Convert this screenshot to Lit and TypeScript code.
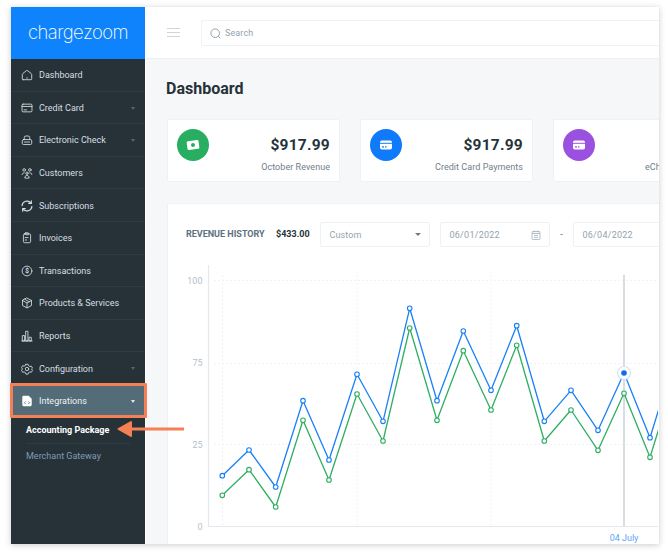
import { LitElement, html, css, svg } from "lit";
import { customElement } from "lit/decorators.js";

const ic = (body: unknown) => html`<svg class="ic" viewBox="0 0 14 14" fill="none" stroke="currentColor" stroke-width="1" stroke-linecap="round" stroke-linejoin="round">${body}</svg>`;

const icons: Record<string, unknown> = {
  home: ic(svg`<path d="M2.500 12.500h9a1 1 0 0 0 1-1V6.500a1.500 1.500 0 0 0-.6-1.200L7.800 2a1.300 1.300 0 0 0-1.600 0L2.100 5.300a1.500 1.500 0 0 0-.6 1.200v5a1 1 0 0 0 1 1z"/><path d="M7 10v.8"/>`),
  card: ic(svg`<rect x="1.200" y="2.500" width="11.600" height="9" rx="1.200"/><path d="M1.200 5.200h11.600M3.500 9.200h3"/>`),
  lock: ic(svg`<path d="M3.800 6.500V4.300a2 2 0 0 1 2-2h2.400a2 2 0 0 1 2 2v2.200"/><rect x="1.500" y="6.500" width="11" height="5.800" rx="1.500"/><path d="M4 9.400h6"/>`),
  users: ic(svg`<circle cx="3.700" cy="3.400" r="1.500"/><circle cx="10.300" cy="3.400" r="1.500"/><circle cx="7" cy="7.300" r="1.400"/><path d="M1.300 8.800c0-1.300 1-2 2.400-2M12.700 8.800c0-1.300-1-2-2.400-2M4.500 12.500c0-1.500 1-2.700 2.500-2.700s2.500 1.200 2.500 2.700z"/>`),
  sync: html`<svg class="ic" viewBox="0 0 14 14" fill="none" stroke="currentColor" stroke-width="1.400" stroke-linecap="round" stroke-linejoin="round"><path d="M1.300 6.500A5.700 5.700 0 0 1 11.500 3.500"/><path d="M12 1v3H9"/><path d="M12.700 7.500A5.700 5.700 0 0 1 2.500 10.500"/><path d="M2 13v-3h3"/></svg>`,
  invoice: ic(svg`<rect x="2.800" y="2.200" width="8.400" height="10.300" rx="1.500"/><rect x="5" y="1" width="4" height="2.200" rx=".6"/><path d="M4.800 6.500h3.400M4.800 9.300h1.800"/>`),
  dollar: ic(svg`<circle cx="7" cy="7" r="5.700"/><text x="7" y="9.600" text-anchor="middle" font-size="7.500" font-weight="700" fill="currentColor" stroke="none" font-family="Roboto, sans-serif">$</text>`),
  box: ic(svg`<path d="M7 1.300l5.200 2.700v6L7 12.700 1.800 10V4z"/><path d="M1.800 4L7 7l5.200-3M7 7v5.700M4.400 2.700l5.200 2.900"/>`),
  bars: ic(svg`<path d="M1 12.800h12"/><rect x="2" y="6.500" width="2.200" height="6.300"/><rect x="5.900" y="1.500" width="2.200" height="11.300"/><rect x="9.800" y="8.500" width="2.200" height="4.300"/>`),
  gear: ic(svg`<path d="M5.700 1.500h2.600l.5 1.700 1.600.9 1.700-.4 1.300 2.300L12.200 7l1.200 1.500-1.300 2.300-1.700-.4-1.600.9-.5 1.700H5.700l-.5-1.700-1.600-.9-1.700.4L.6 8.500 1.800 7 .6 5.500l1.300-2.300 1.700.4 1.600-.9z"/><circle cx="7" cy="7" r="2"/>`),
  file: html`<svg class="ic" viewBox="0 0 14 14"><path d="M2.500 1H9l3.500 3.500V11.500A1.500 1.500 0 0 1 11 13H3A1.500 1.500 0 0 1 1.500 11.500V2.500A1.500 1.500 0 0 1 2.500 1z" fill="#fff"/><path d="M5.500 7.500L4 9l1.500 1.500M8.500 7.500L10 9l-1.500 1.500" stroke="#546c77" fill="none" stroke-width="1"/></svg>`,
};

const menu: [string, string, boolean][] = [
  ["home", "Dashboard", false],
  ["card", "Credit Card", true],
  ["lock", "Electronic Check", true],
  ["users", "Customers", false],
  ["sync", "Subscriptions", false],
  ["invoice", "Invoices", false],
  ["dollar", "Transactions", false],
  ["box", "Products & Services", false],
  ["bars", "Reports", false],
  ["gear", "Configuration", true],
];

const cardGlyph = svg`<rect x="2" y="3.500" width="12" height="9" rx="1.800" fill="#fff"/><path d="M2 6.300h12" stroke="currentColor" stroke-width="1"/><path d="M4 9.800h2M7 9.800h1.500" stroke="currentColor" stroke-width="1.200"/>`;
const cashGlyph = svg`<rect x="2" y="3.500" width="12" height="9" rx="1.500" fill="#fff" transform="rotate(-8 8 8)"/><circle cx="8" cy="8" r="2" fill="currentColor"/>`;

const blue: [number, number][] = [[222.3,475.7],[249,450],[275.7,487],[303,400.7],[329,460],[357,374.3],[383,421.3],[409.7,308.3],[437,400.7],[463.3,331],[491,390.3],[516.7,325.7],[544.3,421.3],[571,390.3],[598,430.3],[624,373],[650,437.7],[677,350]];
const green: [number, number][] = [[222.3,495.3],[249,469.7],[275.7,507],[303,420.3],[329,480],[357,394],[383,441],[409.7,328],[437,420.3],[463.3,350.7],[491,410],[516.7,345.3],[544.3,441],[571,410],[598,450.3],[624,393.3],[650,457.3],[677,370]];

@customElement("app-root")
export class AppRoot extends LitElement {
  static styles = css`
    :host { display: block; width: 668px; height: 553px; background: #fff; font-family: Roboto, "Liberation Sans", sans-serif; overflow: hidden; }
    .page { position: relative; width: 668px; height: 553px; box-sizing: border-box; padding: 7px 9px 9px 11px; }
    .frame { display: flex; height: 100%; background: #fff; box-shadow: 0 1px 6px rgba(60,70,80,.28); overflow: hidden; }
    .side { width: 134px; flex: none; background: #263238; display: flex; flex-direction: column; margin-right: 1px; }
    .brand { height: 52px; flex: none; background: #0f83fb; display: flex; align-items: center; justify-content: center; color: #fff; font-family: Inter, Lato, sans-serif; font-size: 18.500px; font-weight: 200; letter-spacing: -.55px; padding-bottom: 2px; box-sizing: border-box; }
    .row { position: relative; height: 32.600px; flex: none; box-sizing: border-box; display: flex; align-items: center; padding: 1px 0 0 10px; color: #d8dfe3; font-size: 9px; font-weight: 400; border-bottom: 1px solid #2d3b43; }
    .ic { width: 12px; height: 12px; flex: none; margin-right: 6px; color: #d8dfe3; }
    .row .caret { position: absolute; right: 10px; top: 15px; border: 2.500px solid transparent; border-top: 3px solid #55656e; border-bottom: 0; }
    .row.on { background: #546c77; color: #eef2f4; border-bottom: none; padding-top: 0; }
    .row.on .caret { border-top-color: #e3e8ea; }
    .hl { position: absolute; left: 10px; top: 383px; width: 137px; height: 35px; box-sizing: border-box; border: 3px solid #f58055; border-radius: 1px; }
    .sub { padding-left: 15px; font-size: 9px; }
    .sub div { display: flex; align-items: center; width: 104px; height: 25.500px; box-sizing: border-box; color: #7e9bb5; }
    .sub .act { color: #fff; font-weight: 700; border-bottom: 1px solid #2d3b43; height: 26px; }
    .arrow { position: absolute; left: 116px; top: 419px; }
    .main { flex: 1; min-width: 0; display: flex; flex-direction: column; background: #f6f7f9; }
    .top { height: 52px; flex: none; box-sizing: border-box; background: #fff; border-bottom: 1px solid #eceef1; display: flex; align-items: center; padding: 0 0 0 21px; gap: 21px; }
    .burger { width: 13px; height: 9px; flex: none; border-top: 1px solid #ced6db; border-bottom: 1px solid #ced6db; position: relative; box-sizing: border-box; }
    .burger::after { content: ""; position: absolute; left: 0; right: 0; top: 3px; height: 1px; background: #ced6db; }
    .search { flex: 1; height: 26px; box-sizing: border-box; border: 1px solid #f0f1f3; border-right: none; border-radius: 2px 0 0 2px; display: flex; align-items: center; padding: 1px 0 0 8px; gap: 4px; color: #94a3ad; font-size: 9px; letter-spacing: .1px; }
    .content { padding: 0 0 0 20px; flex: 1; min-height: 0; display: flex; flex-direction: column; overflow: hidden; }
    h1 { margin: 20px 0 0; font-size: 16px; line-height: 19px; font-weight: 700; color: #263238; height: 19px; }
    .cards { display: flex; gap: 20px; margin: 21px 0 0 1px; flex: none; width: 520px; overflow: hidden; }
    .card { width: 173px; height: 63px; flex: none; box-sizing: border-box; background: #fff; border: 1px solid #f0f1f3; border-radius: 2px; padding: 9px 9px 0 8.500px; display: flex; justify-content: space-between; }
    .circle { width: 32px; height: 32px; border-radius: 50%; flex: none; display: flex; align-items: center; justify-content: center; }
    .circle svg { width: 16px; height: 16px; }
    .val { text-align: right; }
    .amt { font-size: 15.500px; line-height: 20px; font-weight: 700; color: #263238; margin-top: 6px; letter-spacing: .25px; white-space: nowrap; }
    .lbl { font-size: 9px; line-height: 11px; color: #70808a; margin-top: 7px; white-space: nowrap; letter-spacing: .05px; }
    .card.clip { flex: none; width: 120px; border-right: none; position: relative; }
    .card.clip .lbl { position: absolute; left: 91px; top: 42px; margin: 0; }
    .panel { flex: 1; min-height: 0; margin: 21px 0 0 1px; background: #fff; border-top: 1px solid #f0f1f3; border-left: 1px solid #f0f1f3; position: relative; }
    .bar { display: flex; align-items: center; height: 26px; margin-top: 17px; padding-left: 18px; }
    .t1 { font-size: 9px; font-weight: 700; color: #5c717e; width: 90px; flex: none; white-space: nowrap; }
    .t2 { font-size: 9px; font-weight: 700; color: #263238; width: 44px; flex: none; }
    .field { height: 25px; box-sizing: border-box; border: 1px solid #eff1f3; border-radius: 2px; display: flex; align-items: center; justify-content: space-between; padding: 1px 8px 0 8.500px; font-size: 9px; color: #93a3ad; flex: none; letter-spacing: .25px; }
    .sel { width: 110px; margin-right: 10px; letter-spacing: .1px; }
    .date { width: 110px; }
    .tri { border: 3px solid transparent; border-top: 3.500px solid #6c7c86; border-bottom: 0; }
    .dash { width: 23px; text-align: center; font-size: 9px; color: #55656e; flex: none; }
    .chart { position: absolute; left: -168px; top: -204px; width: 668px; height: 553px; pointer-events: none; overflow: visible; }
    .chart text { font-family: Roboto, sans-serif; font-size: 9px; fill: #b3bfcc; }
  `;

  private poly(pts: [number, number][], color: string) {
    const p = pts.map((a) => a.join(",")).join(" ");
    return svg`<polyline points=${p} fill="none" stroke=${color} stroke-width="1.300" stroke-linejoin="round"/>
      ${pts.map(([x, y]) => svg`<circle cx=${x} cy=${y} r="2.300" fill="#fff" stroke=${color} stroke-width="1.100"/>`)}`;
  }

  render() {
    return html`<div class="page">
      <div class="frame">
        <aside class="side">
          <div class="brand">chargezoom</div>
          ${menu.map(([i, t, c]) => html`<div class="row">${icons[i]}<span>${t}</span>${c ? html`<i class="caret"></i>` : ""}</div>`)}
          <div class="row on">${icons.file}<span>Integrations</span><i class="caret"></i></div>
          <div class="sub">
            <div class="act">Accounting Package</div>
            <div>Merchant Gateway</div>
          </div>
        </aside>
        <main class="main">
          <div class="top">
            <div class="burger"></div>
            <div class="search">
              <svg width="11" height="11" viewBox="0 0 11 11" fill="none" stroke="#8b9aa5" stroke-width=".9"><circle cx="5.200" cy="5.200" r="4.300"/><path d="M8.300 8.300l2 2"/></svg>
              <span>Search</span>
            </div>
          </div>
          <div class="content">
            <h1>Dashboard</h1>
            <div class="cards">
              <div class="card">
                <div class="circle" style="background:#27ae60;color:#27ae60"><svg viewBox="0 0 16 16">${cashGlyph}</svg></div>
                <div class="val"><div class="amt">$917.99</div><div class="lbl">October Revenue</div></div>
              </div>
              <div class="card">
                <div class="circle" style="background:#0f7bfb;color:#0f7bfb"><svg viewBox="0 0 16 16">${cardGlyph}</svg></div>
                <div class="val"><div class="amt">$917.99</div><div class="lbl">Credit Card Payments</div></div>
              </div>
              <div class="card clip">
                <div class="circle" style="background:#9b51e0;color:#9b51e0"><svg viewBox="0 0 16 16">${cardGlyph}</svg></div>
                <div class="lbl">eCheck Payments</div>
              </div>
            </div>
            <section class="panel">
              <div class="bar">
                <span class="t1">REVENUE HISTORY</span>
                <span class="t2">$433.00</span>
                <div class="field sel"><span>Custom</span><i class="tri"></i></div>
                <div class="field date"><span>06/01/2022</span>
                  <svg width="10" height="10" viewBox="0 0 10 10" fill="none" stroke="#a3aeb6" stroke-width=".8"><rect x="1" y="1.500" width="8" height="8" rx="1"/><path d="M1 3.500h8M3 .5v2M7 .5v2M3 5.500h4M3 7.500h4"/></svg>
                </div>
                <span class="dash">-</span>
                <div class="field date"><span>06/04/2022</span></div>
              </div>
              <svg class="chart" viewBox="0 0 668 553">
                <defs><clipPath id="cp"><rect x="167" y="204" width="491" height="340"/></clipPath></defs>
                <g stroke="#f0f2f5" stroke-width="1" stroke-dasharray="2 2">
                  ${[280.5, 363.5, 444.5].map((y) => svg`<line x1="214" x2="658" y1=${y} y2=${y}/>`)}
                  ${[222.5, 357, 491].map((x) => svg`<line x1=${x} x2=${x} y1="275" y2="526"/>`)}
                </g>
                <path d="M208.500 265V526.500H658" fill="none" stroke="#e3e8f0" stroke-width="1.200"/>
                <line x1="624" x2="624" y1="275" y2="526" stroke="#cbd2d9" stroke-width="1.500"/>
                <g clip-path="url(#cp)">
                  ${this.poly(green, "#2fae62")}
                  ${this.poly(blue, "#1a80f5")}
                </g>
                <circle cx="624" cy="373" r="6.500" fill="#fff" stroke="#cfe3fd" stroke-width="1.200"/>
                <circle cx="624" cy="373" r="2.800" fill="#0f6fe8"/>
                <text x="202.500" y="284" text-anchor="end">100</text>
                <text x="202.500" y="366" text-anchor="end">75</text>
                <text x="202.500" y="448" text-anchor="end">25</text>
                <text x="202.500" y="530" text-anchor="end">0</text>
                <text x="624" y="541" text-anchor="middle" style="fill:#5fa4f5">04 July</text>
              </svg>
            </section>
          </div>
        </main>
      </div>
      <div class="hl"></div>
      <svg class="arrow" width="70" height="20" viewBox="0 0 70 20">
        <path d="M68 10H14" stroke="#f58055" stroke-width="3"/>
        <path d="M2.500 10L15 3V17z" fill="#f58055" stroke="#f58055" stroke-width="2" stroke-linejoin="round"/>
      </svg>
    </div>`;
  }
}
